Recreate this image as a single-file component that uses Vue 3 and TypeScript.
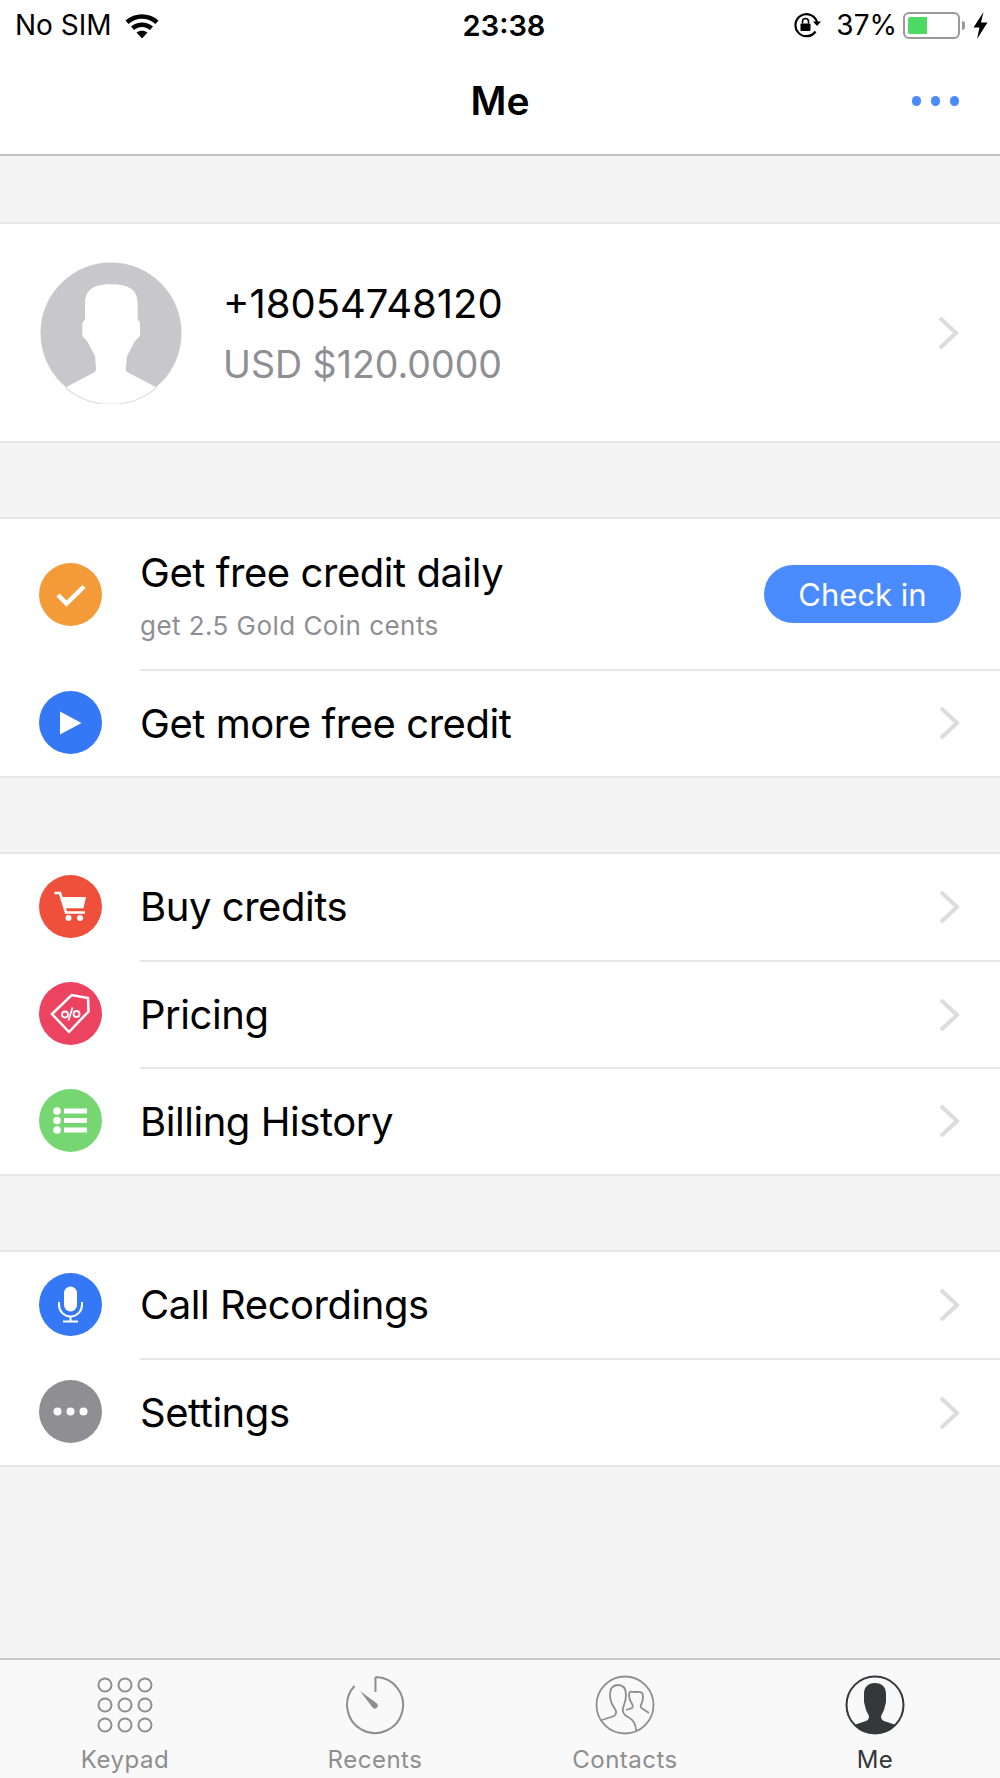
<template>
  <div class="page">
    <div class="status-bar">
      <div class="status-left">
        <span>No SIM</span>
        <svg class="wifi" width="36" height="26" viewBox="0 0 36 26">
          <path d="M1.5 8.5C11 0 25 0 34.5 8.5L31.5 12C23.5 5 12.5 5 4.5 12Z" fill="#000" />
          <path d="M7 14.5C13.5 9 22.5 9 29 14.5L26 18C21 14 15 14 10 18Z" fill="#000" />
          <path d="M12.5 20.5C16 18 20 18 23.5 20.5L18 26.5Z" fill="#000" />
        </svg>
      </div>
      <span class="status-time">23:38</span>
      <div class="status-right">
        <svg width="28" height="26" viewBox="0 0 28 26">
          <path d="M22.5 19.5A11 11 0 1 1 24 10" fill="none" stroke="#000" stroke-width="2.2" />
          <path d="M20 9.5H28L24 14Z" fill="#000" />
          <rect x="7.5" y="11.5" width="10" height="7.5" rx="1" fill="#000" />
          <path d="M9.5 11.5V9.5a3 3 0 0 1 6 0v2" fill="none" stroke="#000" stroke-width="1.6" />
        </svg>
        <span class="battery-text">37%</span>
        <div class="battery">
          <div class="battery-level"></div>
        </div>
        <div class="battery-tip"></div>
        <svg class="bolt" width="15" height="27" viewBox="0 0 15 27">
          <path d="M10.5 0L0.5 15.5H6.5L4 27L14.5 10.5H8Z" fill="#000" />
        </svg>
      </div>
    </div>

    <div class="nav-bar">
      <span class="nav-title">Me</span>
      <div class="nav-more">
        <i></i><i></i><i></i>
      </div>
    </div>

    <section class="group profile">
      <svg class="avatar" width="142" height="142" viewBox="0 0 142 142">
        <circle cx="71" cy="71" r="70.5" fill="#c7c7cc" />
        <path
          d="M71 22.3C88 22.3 97.7 27 97.7 42V57.3L100 61V74L95 79L87 94L85.7 107C85.7 109 87 110 89 111L116.7 125.5C91 148 51 148 25.3 125.5L53 111C55 110 56 109 56 107L55 94L47 79L42.3 74V61L45 57.3V42C45 27 54 22.3 71 22.3Z"
          fill="#fff"
        />
        <path d="M25.3 125.5C51 148 91 148 116.7 125.5" fill="none" stroke="#dfdfe2" stroke-width="1.2" />
      </svg>
      <div class="profile-text">
        <div class="phone">+18054748120</div>
        <div class="balance">USD $120.0000</div>
      </div>
      <svg class="chevron" width="22" height="34" viewBox="0 0 22 34">
        <path d="M2 2L18 17L2 32" fill="none" stroke="#dcdcdc" stroke-width="4" />
      </svg>
    </section>

    <section v-for="(group, g) in groups" :key="g" class="group">
      <div v-for="row in group" :key="row.title" class="row" :class="{ tall: row.subtitle }">
        <div class="row-icon" :style="{ background: row.color }">
          <svg width="63" height="63" viewBox="0 0 63 63">
            <path v-if="row.icon === 'check'" d="M19 32L27.5 40.5L45 23.5" fill="none" stroke="#fff" stroke-width="4.5" />
            <path v-else-if="row.icon === 'play'" d="M21 20.5L42.5 32L21 43.5Z" fill="#fff" />
            <g v-else-if="row.icon === 'cart'">
              <path d="M15.5 18H21L27 37.5H46" fill="none" stroke="#fff" stroke-width="2.6" />
              <path d="M22 22H47L44.5 33.2H25.5Z" fill="#fff" />
              <circle cx="29.5" cy="43" r="3" fill="#fff" />
              <circle cx="41" cy="43" r="3" fill="#fff" />
            </g>
            <g v-else-if="row.icon === 'tag'">
              <path d="M13 32L32.7 13L49 16L49.5 29.5L30 50Z" fill="none" stroke="#fff" stroke-width="2.5" />
              <circle cx="26" cy="32.5" r="3" fill="none" stroke="#fff" stroke-width="1.8" />
              <circle cx="37.5" cy="32" r="3" fill="none" stroke="#fff" stroke-width="1.8" />
              <path d="M29.5 38.5L33.5 25.5" stroke="#fff" stroke-width="1.8" />
            </g>
            <g v-else-if="row.icon === 'list'">
              <circle cx="18" cy="22" r="3.8" fill="#fff" />
              <circle cx="18" cy="31.5" r="3.8" fill="#fff" />
              <circle cx="18" cy="41" r="3.8" fill="#fff" />
              <rect x="25" y="19.5" width="23" height="5" fill="#fff" />
              <rect x="25" y="29" width="23" height="5" fill="#fff" />
              <rect x="25" y="38.5" width="23" height="5" fill="#fff" />
            </g>
            <g v-else-if="row.icon === 'mic'">
              <rect x="25" y="13.5" width="13" height="25" rx="6.5" fill="#fff" />
              <path d="M20 29V32A11.5 11.5 0 0 0 43 32V29" fill="none" stroke="#fff" stroke-width="2" />
              <path d="M31.5 43.5V48M24 48.5H39" fill="none" stroke="#fff" stroke-width="2" />
            </g>
            <g v-else>
              <circle cx="18.5" cy="31.5" r="4" fill="#fff" />
              <circle cx="31.5" cy="31.5" r="4" fill="#fff" />
              <circle cx="44.5" cy="31.5" r="4" fill="#fff" />
            </g>
          </svg>
        </div>
        <div class="row-body">
          <div class="row-text">
            <div class="row-title">{{ row.title }}</div>
            <div v-if="row.subtitle" class="row-subtitle">{{ row.subtitle }}</div>
          </div>
          <button v-if="row.action" class="check-in">{{ row.action }}</button>
          <svg v-else class="chevron" width="22" height="34" viewBox="0 0 22 34">
            <path d="M2 2L18 17L2 32" fill="none" stroke="#dcdcdc" stroke-width="4" />
          </svg>
        </div>
      </div>
    </section>

    <div class="spacer"></div>

    <nav class="tab-bar">
      <div v-for="tab in tabs" :key="tab" class="tab" :class="{ active: tab === 'Me' }">
        <svg width="60" height="60" viewBox="0 0 60 60">
          <g v-if="tab === 'Keypad'" fill="none" stroke="#8e8e8e" stroke-width="2">
            <template v-for="y in [10, 30, 50]" :key="y">
              <circle v-for="x in [10, 30, 50]" :key="x" :cx="x" :cy="y" r="6.5" />
            </template>
          </g>
          <g v-else-if="tab === 'Recents'">
            <path d="M30.5 2A28 28 0 1 1 9.5 11" fill="none" stroke="#8e8e8e" stroke-width="2" />
            <path d="M30.5 2V17" fill="none" stroke="#8e8e8e" stroke-width="2" />
            <path d="M15 16L32 28.5A3 3 0 0 1 27.5 32.5Z" fill="#8e8e8e" />
          </g>
          <g v-else-if="tab === 'Contacts'" fill="none" stroke="#8e8e8e" stroke-width="1.8">
            <circle cx="30" cy="30" r="28.5" />
            <path d="M7 45L19 41C21.5 40 21.5 36 20 34C17 30 15 26 15 20C15 12 19 10 23 10C28 10 31 13 31 20C31 26 29 30 28 33C27 37 29 40 33 42C37 44 41 47 41 56" />
            <path d="M31 35L37 33C38 32 38 30 37 29C35 26 34 23 34 20C34 15 37 17 41 17C45 17 48 16 48 22C48 25 47 28 46 30C45 32 46 33 48 34L54 38" />
          </g>
          <g v-else>
            <circle cx="30" cy="30" r="28.5" fill="none" stroke="#36373b" stroke-width="2" />
            <path
              d="M30 8C37 8 41 12 41 19V27L39 35L36 41C36 44 37 45 39 46L51 50C40 62 20 62 9 50L21 46C23 45 24 44 24 41L21 35L19 27V19C19 12 23 8 30 8Z"
              fill="#36373b"
            />
          </g>
        </svg>
        <span class="tab-label">{{ tab }}</span>
      </div>
    </nav>
  </div>
</template>

<script setup lang="ts">
interface Row {
  title: string;
  subtitle?: string;
  action?: string;
  icon: string;
  color: string;
}

const groups: Row[][] = [
  [
    { title: "Get free credit daily", subtitle: "get 2.5 Gold Coin cents", action: "Check in", icon: "check", color: "#f29b38" },
    { title: "Get more free credit", icon: "play", color: "#3478f6" },
  ],
  [
    { title: "Buy credits", icon: "cart", color: "#ee503c" },
    { title: "Pricing", icon: "tag", color: "#ec4360" },
    { title: "Billing History", icon: "list", color: "#76d672" },
  ],
  [
    { title: "Call Recordings", icon: "mic", color: "#3478f6" },
    { title: "Settings", icon: "dots", color: "#8e8e93" },
  ],
];

const tabs = ["Keypad", "Recents", "Contacts", "Me"];
</script>

<style>
html,
body {
  margin: 0;
  background: #f4f4f4;
}
</style>

<style scoped>
.page {
  display: flex;
  flex-direction: column;
  height: 1778px;
  background: #f4f4f4;
  color: #000;
  font-family: Inter, "Liberation Sans", sans-serif;
  overflow: hidden;
}

.status-bar {
  display: flex;
  align-items: center;
  justify-content: space-between;
  height: 50px;
  padding: 0 12px 0 15px;
  background: #fff;
  font-size: 28px;
  position: relative;
  flex-shrink: 0;
}

.status-left,
.status-right {
  display: flex;
  align-items: center;
}

.wifi {
  margin-left: 12px;
}

.status-time {
  position: absolute;
  left: 0;
  right: 0;
  top: 8px;
  padding-left: 8px;
  text-align: center;
  font-size: 29px;
  font-weight: 600;
}

.battery-text {
  margin-left: 15px;
}

.battery {
  width: 57px;
  height: 27px;
  margin-left: 6px;
  padding: 3px;
  box-sizing: border-box;
  border: 2px solid #9a9a9a;
  border-radius: 6px;
}

.battery-level {
  width: 19px;
  height: 100%;
  background: #4cd964;
  border-radius: 2px 0 0 2px;
}

.battery-tip {
  width: 3px;
  height: 9px;
  margin-left: 2px;
  background: #9a9a9a;
  border-radius: 0 3px 3px 0;
}

.bolt {
  margin-left: 8px;
}

.nav-bar {
  position: relative;
  display: flex;
  align-items: center;
  justify-content: center;
  height: 106px;
  padding-bottom: 4px;
  box-sizing: border-box;
  background: #fff;
  border-bottom: 2px solid #c0c0c0;
  flex-shrink: 0;
}

.nav-title {
  font-size: 39px;
  font-weight: 600;
}

.nav-more {
  position: absolute;
  right: 41px;
  top: 50%;
  margin-top: -6px;
  display: flex;
  gap: 9.5px;
}

.nav-more i {
  width: 9.5px;
  height: 9.5px;
  border-radius: 50%;
  background: #4a8bff;
}

.group {
  margin-top: 74px;
  background: #fff;
  border-top: 2px solid #e6e6e6;
  border-bottom: 2px solid #e6e6e6;
  flex-shrink: 0;
}

.profile {
  margin-top: 66px;
  display: flex;
  align-items: center;
  height: 221px;
  box-sizing: border-box;
  padding: 0 40px;
}

.avatar {
  flex-shrink: 0;
}

.profile-text {
  flex: 1;
  margin-left: 41px;
  padding-top: 2px;
}

.phone {
  font-size: 40px;
  line-height: 61px;
}

.balance {
  font-size: 37.5px;
  line-height: 61px;
  color: #8e8e93;
}

.row {
  display: flex;
  align-items: stretch;
  height: 106.67px;
  padding-left: 39px;
}

.row.tall {
  height: 150px;
}

.row-icon {
  align-self: center;
  width: 63px;
  height: 63px;
  border-radius: 50%;
  flex-shrink: 0;
}

.row-icon svg {
  display: block;
}

.row-body {
  display: flex;
  align-items: center;
  flex: 1;
  margin-left: 38px;
  padding-right: 39px;
}

.row + .row .row-body {
  border-top: 2px solid #e6e6e6;
}

.row-text {
  flex: 1;
}

.row-title {
  font-size: 40px;
  letter-spacing: -0.45px;
}

.row-subtitle {
  margin-top: 13px;
  font-size: 26px;
  letter-spacing: 0.45px;
  color: #8e8e93;
}

.check-in {
  width: 197px;
  height: 58px;
  padding: 0;
  border: 0;
  border-radius: 29px;
  background: #4a8bff;
  color: #fff;
  font-family: inherit;
  font-size: 31px;
}

.spacer {
  flex: 1;
}

.tab-bar {
  display: flex;
  height: 120px;
  box-sizing: border-box;
  background: #f9f9f9;
  border-top: 2px solid #c8c8c8;
  flex-shrink: 0;
}

.tab {
  flex: 1;
  display: flex;
  flex-direction: column;
  align-items: center;
  padding-top: 15px;
  color: #8e8e8e;
}

.tab.active {
  color: #36373b;
}

.tab-label {
  margin-top: 10px;
  font-size: 24px;
  letter-spacing: 0.5px;
}
</style>
